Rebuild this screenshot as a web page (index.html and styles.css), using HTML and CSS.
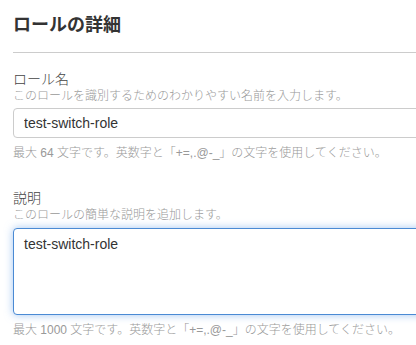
FILE: index.html
```html
<!DOCTYPE html>
<html lang="ja">
<head>
  <meta charset="UTF-8" />
  <meta name="viewport" content="width=device-width, initial-scale=1.0"/>
  <title>ロールの詳細</title>
  <link rel="stylesheet" href="styles.css">
</head>
<body>
  <div class="panel">
    <h2 class="title">ロールの詳細</h2>

    <div class="field">
      <label class="label" for="role-name">ロール名</label>
      <div class="hint">このロールを識別するためのわかりやすい名前を入力します。</div>
      <input type="text" class="input" id="role-name" value="test-switch-role" />
      <div class="note">最大 64 文字です。英数字と「+=,.@-_」の文字を使用してください。</div>
    </div>

    <div class="field">
      <label class="label" for="role-desc">説明</label>
      <div class="hint">このロールの簡単な説明を追加します。</div>
      <textarea class="input textarea focused" id="role-desc">test-switch-role</textarea>
      <div class="note">最大 1000 文字です。英数字と「+=,.@-_」の文字を使用してください。</div>
    </div>
  </div>

  <script>
    const desc = document.getElementById("role-desc");
    desc.focus();
    desc.setSelectionRange(desc.value.length, desc.value.length);
  </script>
</body>
</html>
```

FILE: styles.css
```css
body {
  margin: 0;
  background: #ffffff;
  font-family: Arial, "Liberation Sans", "Noto Sans CJK JP", sans-serif;
  overflow: hidden;
}

.panel {
  width: 403px;
  padding: 13px 0 10px 13px;
  overflow: hidden;
}

.title {
  margin: 0 -20px 0 0;
  font-size: 18px;
  line-height: 24px;
  font-weight: bold;
  color: #333;
  padding-bottom: 15px;
  border-bottom: 1px solid #ccc;
}

.field {
  display: flex;
  flex-direction: column;
}

.field + .field {
  margin-top: 28px;
}

.title + .field {
  margin-top: 17px;
}

.label {
  font-size: 14px;
  line-height: 18px;
  font-weight: 300;
  color: #444;
}

.hint {
  font-size: 12px;
  line-height: 16px;
  font-weight: 300;
  color: #999;
}

.input {
  margin-top: 4px;
  height: 30px;
  box-sizing: border-box;
  width: 420px;
  padding: 0 10px;
  font-family: Arial, "Liberation Sans", sans-serif;
  font-size: 14px;
  color: #333;
  border: 1px solid #ccc;
  border-radius: 4px;
  background: #fff;
  outline: none;
  caret-color: #222;
}

.textarea {
  height: 87px;
  margin-top: 5px;
  padding-top: 6px;
  line-height: 18px;
  resize: none;
}

.focused {
  border-color: #4a8ad4;
  box-shadow: 0 0 8px rgba(102, 160, 233, 0.6);
}

.note {
  margin-top: 7px;
  font-size: 12px;
  line-height: 16px;
  font-weight: 300;
  color: #999;
}
```
